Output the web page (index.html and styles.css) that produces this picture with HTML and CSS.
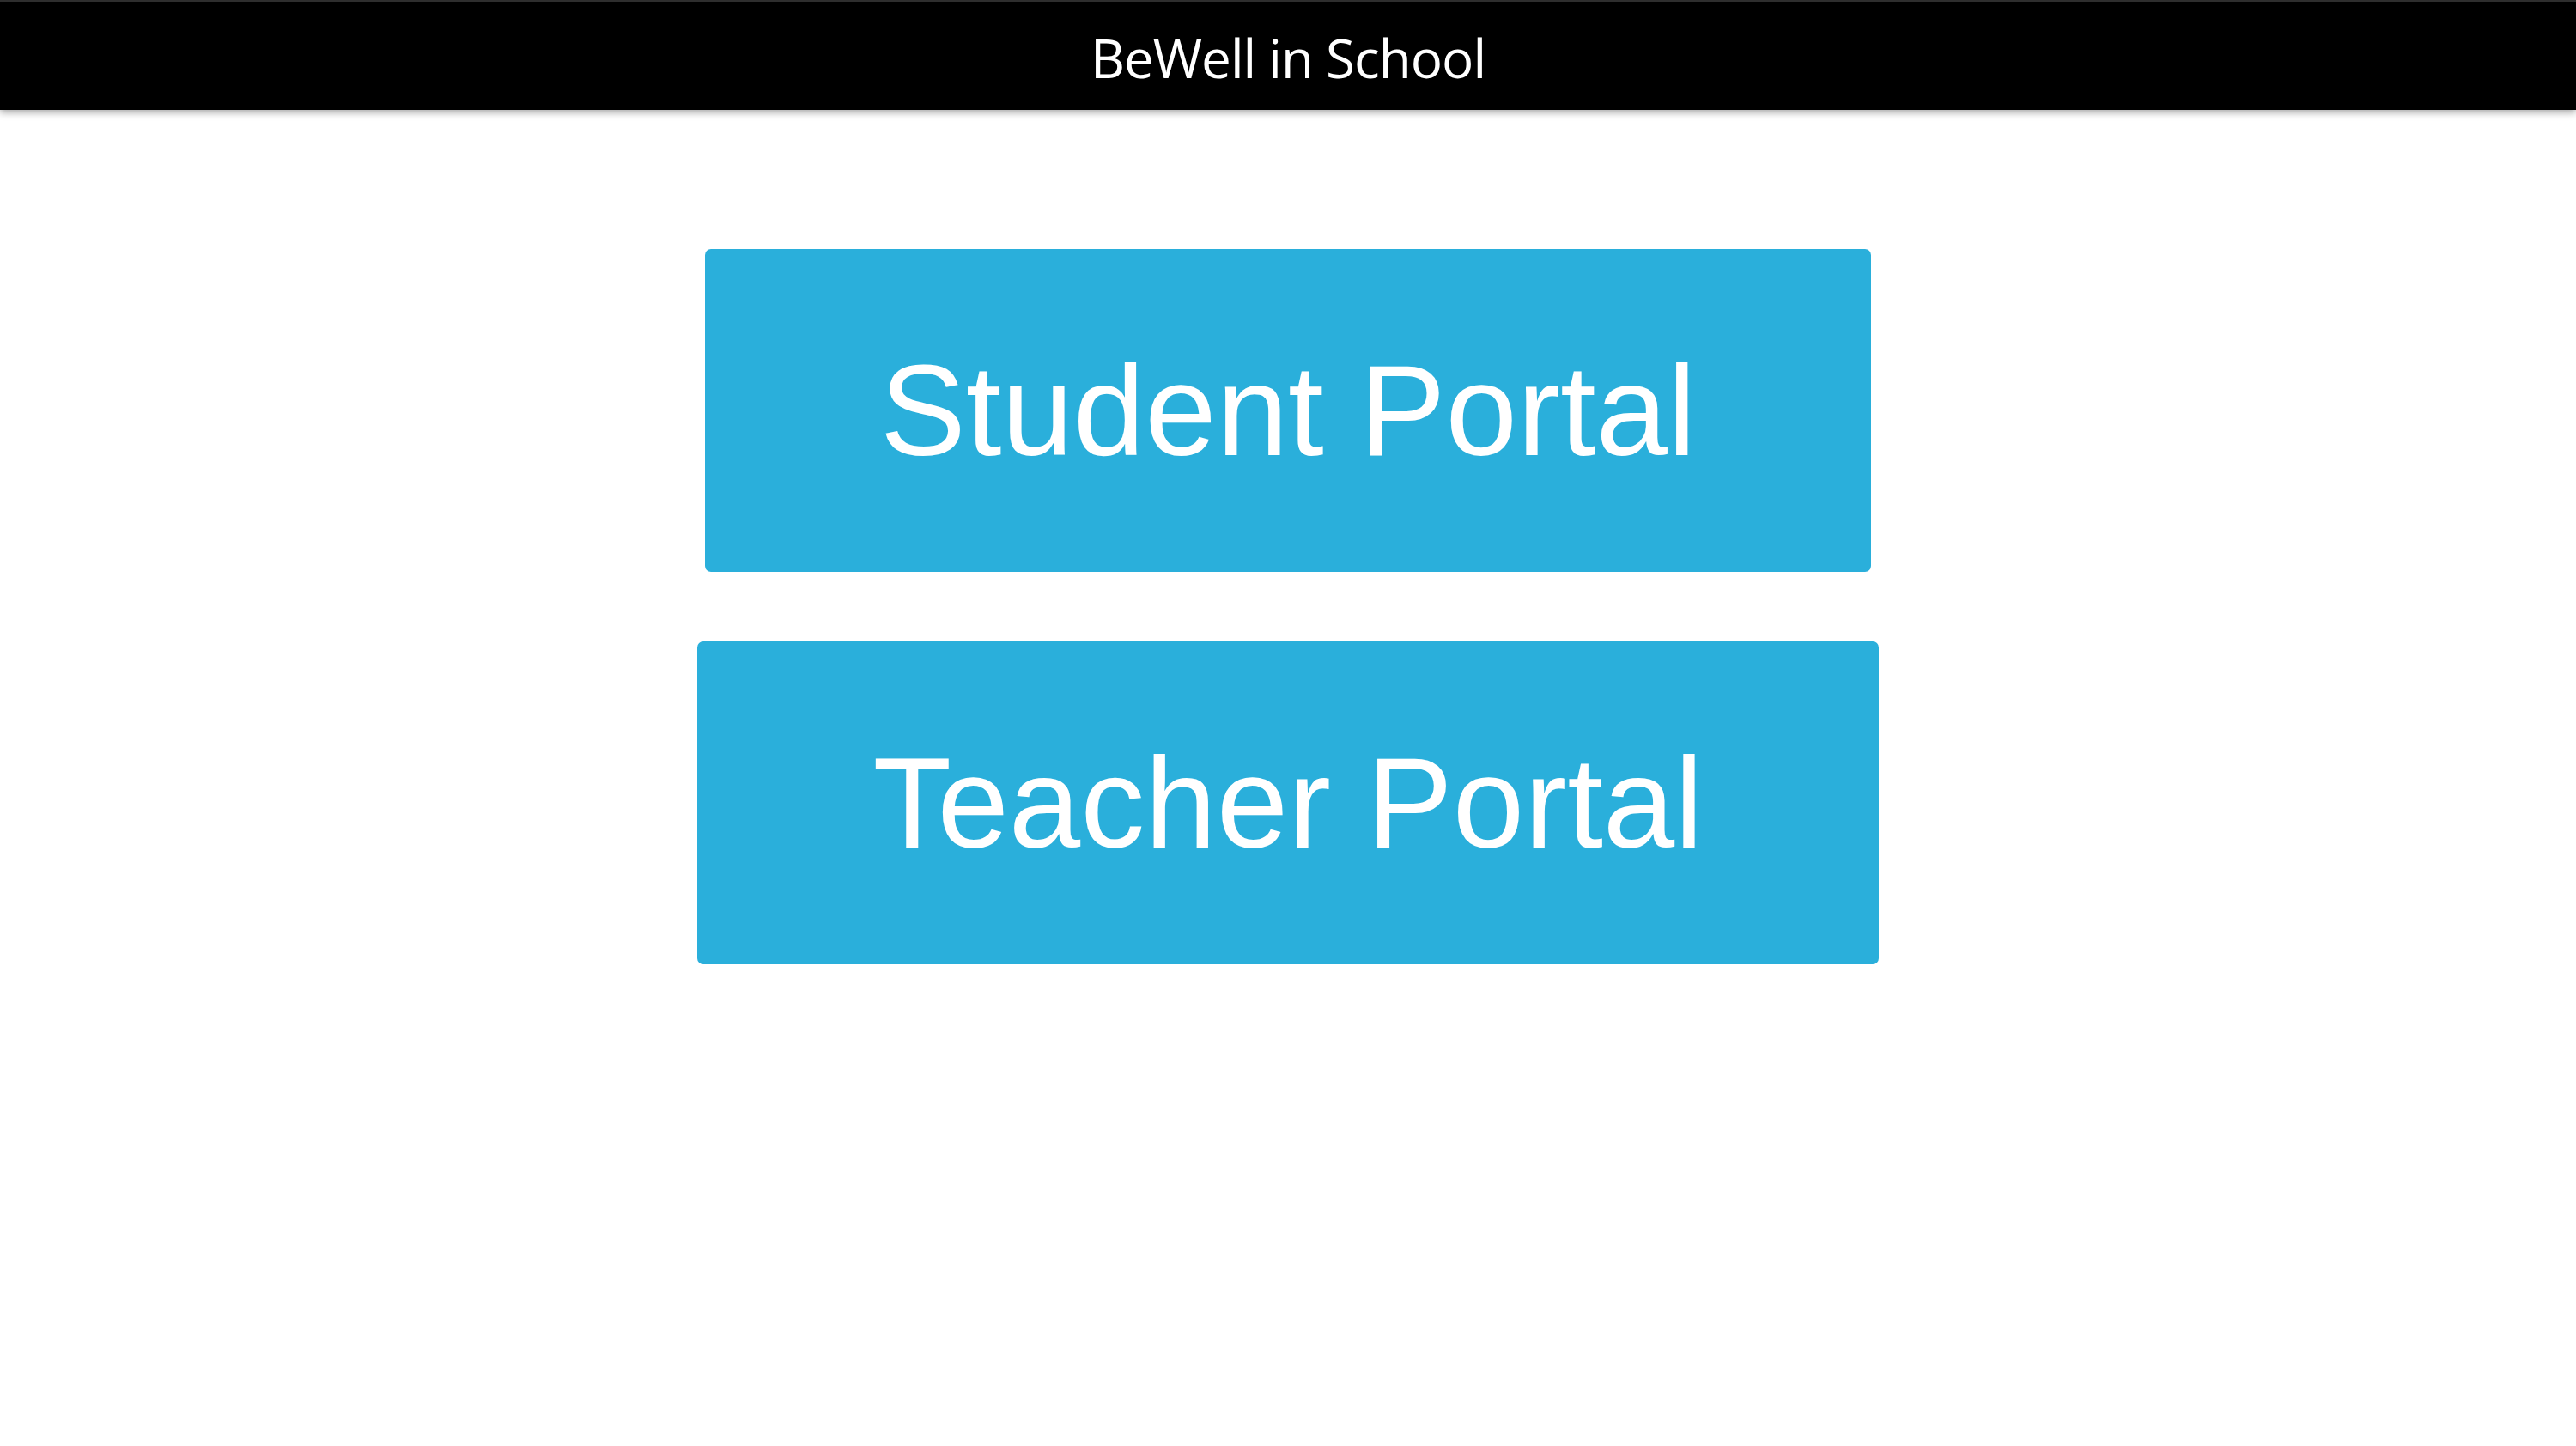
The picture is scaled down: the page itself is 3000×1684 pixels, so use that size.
FILE: index.html
```html
<!DOCTYPE html>
<html lang="en">
<head>
<meta charset="utf-8">
<title>BeWell in School</title>
<link rel="stylesheet" href="styles.css">
</head>
<body>
<header class="topbar">
  <h1 class="topbar-title">BeWell in School</h1>
</header>
<main class="portals">
  <a class="portal portal-student" href="#">Student Portal</a>
  <a class="portal portal-teacher" href="#">Teacher Portal</a>
</main>
</body>
</html>
```

FILE: styles.css
```css
html, body {
  margin: 0;
  padding: 0;
  background: #ffffff;
}

body {
  font-family: "Liberation Sans", Arial, sans-serif;
  min-height: 100vh;
}

.topbar {
  height: 126px;
  background: #000000;
  border-top: 2px solid #2e2e2e;
  box-shadow: 0 3px 8px rgba(0, 0, 0, 0.35);
  display: flex;
  align-items: center;
  justify-content: center;
  position: relative;
  z-index: 1;
}

.topbar-title {
  margin: 0;
  color: #ffffff;
  font-family: "Open Sans", "Noto Sans", sans-serif;
  font-weight: 400;
  font-size: 62px;
  letter-spacing: -1px;
  line-height: 1;
  padding-top: 4px;
}

.portals {
  display: flex;
  flex-direction: column;
  align-items: center;
  gap: 81px;
  padding-top: 162px;
}

.portal {
  display: flex;
  align-items: center;
  justify-content: center;
  height: 376px;
  background: #2aafdb;
  border-radius: 7px;
  color: #ffffff;
  text-decoration: none;
  font-family: "Liberation Sans", Arial, sans-serif;
  font-size: 150px;
  letter-spacing: 0;
}

.portal-student {
  width: 1358px;
}

.portal-teacher {
  width: 1376px;
}
```
